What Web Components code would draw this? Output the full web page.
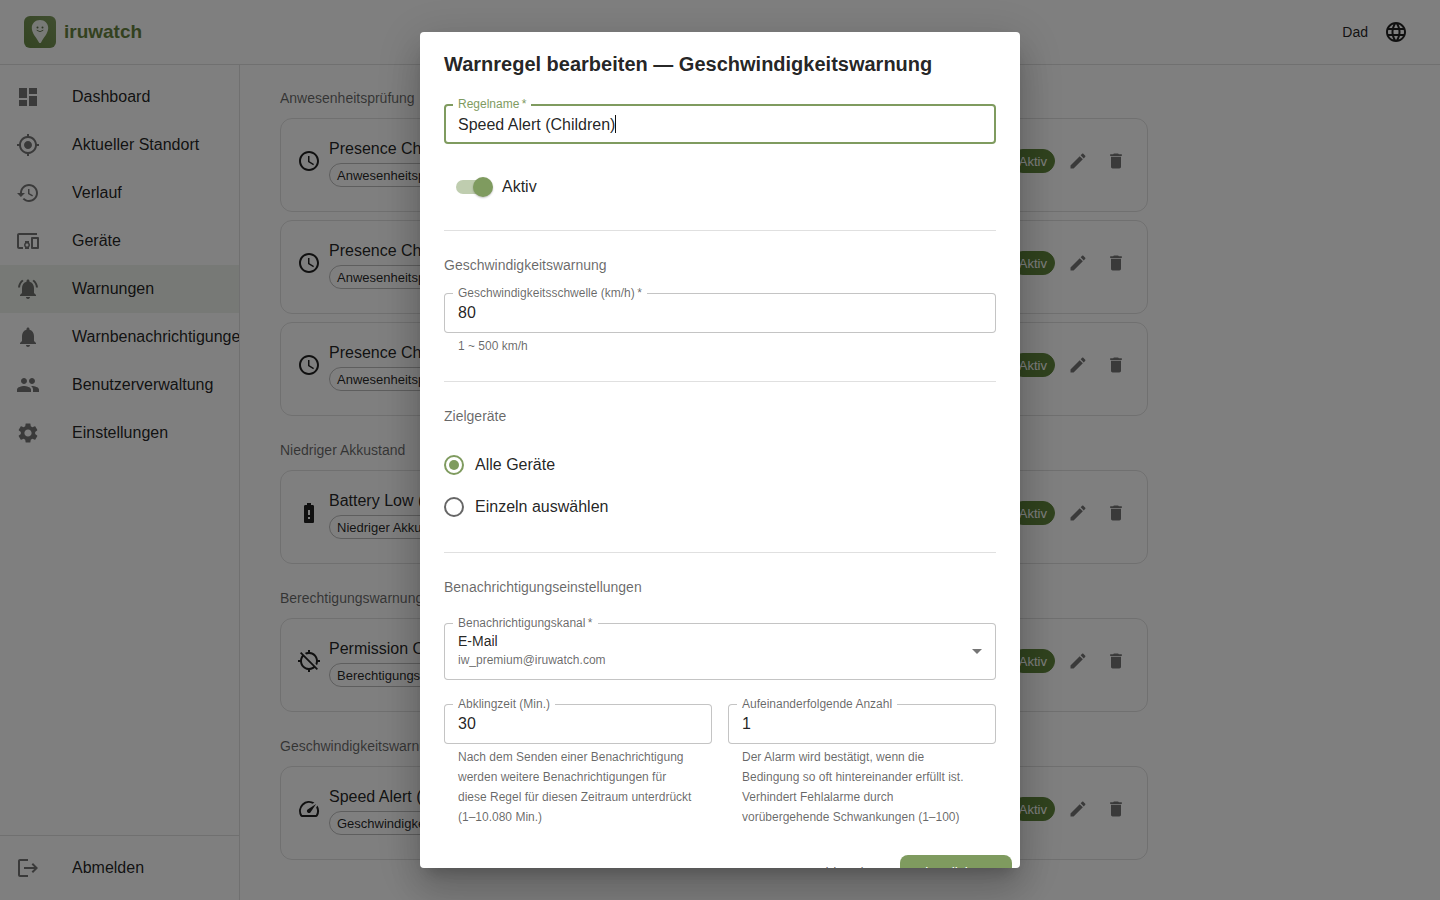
<!DOCTYPE html>
<html lang="de">
<head>
<meta charset="utf-8">
<meta name="viewport" content="width=device-width, initial-scale=1">
<title>iruwatch – Warnungen</title>
<style>
  :root {
    --green: #7f9b5f;
    --brand: #66833f;
    --success: #60863c;
    --text: rgba(0, 0, 0, .87);
    --text-soft: rgba(0, 0, 0, .6);
    --icon: rgba(0, 0, 0, .54);
    --line: rgba(0, 0, 0, .12);
  }
  body {
    margin: 0;
    font: 16px/24px "Liberation Sans", Arial, sans-serif;
    color: var(--text);
    background: #fff;
  }
</style>
</head>
<body>
<iw-app>
  <iw-header slot="header" user="Dad"></iw-header>
  <iw-sidebar slot="nav">
    <iw-nav-item icon="dashboard">Dashboard</iw-nav-item>
    <iw-nav-item icon="location">Aktueller Standort</iw-nav-item>
    <iw-nav-item icon="history">Verlauf</iw-nav-item>
    <iw-nav-item icon="devices">Geräte</iw-nav-item>
    <iw-nav-item icon="bellActive" selected>Warnungen</iw-nav-item>
    <iw-nav-item icon="bell">Warnbenachrichtigungen</iw-nav-item>
    <iw-nav-item icon="people">Benutzerverwaltung</iw-nav-item>
    <iw-nav-item icon="settings">Einstellungen</iw-nav-item>
    <iw-nav-item slot="footer" icon="logout">Abmelden</iw-nav-item>
  </iw-sidebar>

  <iw-rule-group heading="Anwesenheitsprüfung">
    <iw-rule-card icon="clock" name="Presence Check" kind="Anwesenheitsprüfung"></iw-rule-card>
    <iw-rule-card icon="clock" name="Presence Check" kind="Anwesenheitsprüfung"></iw-rule-card>
    <iw-rule-card icon="clock" name="Presence Check" kind="Anwesenheitsprüfung"></iw-rule-card>
  </iw-rule-group>
  <iw-rule-group heading="Niedriger Akkustand">
    <iw-rule-card icon="battery" name="Battery Low (Children)" kind="Niedriger Akkustand"></iw-rule-card>
  </iw-rule-group>
  <iw-rule-group heading="Berechtigungswarnung">
    <iw-rule-card icon="locationOff" name="Permission Off" kind="Berechtigungswarnung"></iw-rule-card>
  </iw-rule-group>
  <iw-rule-group heading="Geschwindigkeitswarnung">
    <iw-rule-card icon="speed" name="Speed Alert (Children)" kind="Geschwindigkeitswarnung"></iw-rule-card>
  </iw-rule-group>
</iw-app>

<iw-dialog heading="Warnregel bearbeiten — Geschwindigkeitswarnung">
  <iw-form-section>
    <iw-text-field label="Regelname" required active value="Speed Alert (Children)"></iw-text-field>
    <iw-switch>Aktiv</iw-switch>
  </iw-form-section>
  <iw-form-section heading="Geschwindigkeitswarnung">
    <iw-text-field label="Geschwindigkeitsschwelle (km/h)" required value="80" helper="1 ~ 500 km/h"></iw-text-field>
  </iw-form-section>
  <iw-form-section heading="Zielgeräte">
    <iw-radio-group label="Zielgeräte" options="Alle Geräte|Einzeln auswählen"></iw-radio-group>
  </iw-form-section>
  <iw-form-section heading="Benachrichtigungseinstellungen" loose>
    <iw-select label="Benachrichtigungskanal" required value="E-Mail" detail="iw_premium@iruwatch.com"></iw-select>
    <iw-columns>
      <iw-text-field label="Abklingzeit (Min.)" value="30" helper="Nach dem Senden einer Benachrichtigung werden weitere Benachrichtigungen für diese Regel für diesen Zeitraum unterdrückt (1–10.080 Min.)"></iw-text-field>
      <iw-text-field label="Aufeinanderfolgende Anzahl" value="1" helper="Der Alarm wird bestätigt, wenn die Bedingung so oft hintereinander erfüllt ist. Verhindert Fehlalarme durch vorübergehende Schwankungen (1–100)"></iw-text-field>
    </iw-columns>
  </iw-form-section>
  <iw-button slot="actions" plain>Abbrechen</iw-button>
  <iw-button slot="actions">Aktualisieren</iw-button>
</iw-dialog>

<script>
const ICONS = {
  dashboard: 'M3 13h8V3H3v10zm0 8h8v-6H3v6zm10 0h8V11h-8v10zm0-18v6h8V3h-8z',
  location: 'M12 8c-2.21 0-4 1.79-4 4s1.79 4 4 4 4-1.79 4-4-1.79-4-4-4zm8.94 3c-.46-4.17-3.77-7.48-7.94-7.94V1h-2v2.06C6.83 3.52 3.52 6.83 3.06 11H1v2h2.06c.46 4.17 3.77 7.48 7.94 7.94V23h2v-2.06c4.17-.46 7.48-3.77 7.94-7.94H23v-2h-2.06zM12 19c-3.87 0-7-3.13-7-7s3.13-7 7-7 7 3.13 7 7-3.13 7-7 7z',
  history: 'M13 3c-4.97 0-9 4.03-9 9H1l3.89 3.89.07.14L9 12H6c0-3.87 3.13-7 7-7s7 3.13 7 7-3.13 7-7 7c-1.93 0-3.68-.79-4.94-2.06l-1.42 1.42C8.27 19.99 10.51 21 13 21c4.97 0 9-4.03 9-9s-4.03-9-9-9zm-1 5v5l4.28 2.54.72-1.21-3.5-2.08V8H12z',
  devices: 'M3 6h18V4H3c-1.1 0-2 .9-2 2v12c0 1.1.9 2 2 2h4v-2H3V6zm10 6H9v1.78c-.61.55-1 1.33-1 2.22s.39 1.67 1 2.22V20h4v-1.78c.61-.55 1-1.34 1-2.22s-.39-1.67-1-2.22V12zm-2 5.5c-.83 0-1.5-.67-1.5-1.5s.67-1.5 1.5-1.5 1.5.67 1.5 1.5-.67 1.5-1.5 1.5zM22 8h-6c-.5 0-1 .5-1 1v10c0 .5.5 1 1 1h6c.5 0 1-.5 1-1V9c0-.5-.5-1-1-1zm-1 10h-4v-8h4v8z',
  bellActive: 'M7.58 4.08L6.15 2.65C3.75 4.48 2.17 7.3 2.03 10.5h2c.15-2.65 1.51-4.97 3.55-6.42zm12.39 6.42h2c-.15-3.2-1.73-6.02-4.12-7.85l-1.42 1.43c2.02 1.45 3.39 3.77 3.54 6.42zM18 11c0-3.07-1.64-5.64-4.5-6.32V4c0-.83-.67-1.5-1.5-1.5s-1.5.67-1.5 1.5v.68C7.63 5.36 6 7.92 6 11v5l-2 2v1h16v-1l-2-2v-5zm-6 11c.14 0 .27-.01.4-.04.65-.14 1.18-.58 1.44-1.18.1-.24.15-.5.15-.78h-4c.01 1.1.9 2 2.01 2z',
  bell: 'M12 22c1.1 0 2-.9 2-2h-4c0 1.1.89 2 2 2zm6-6v-5c0-3.07-1.64-5.64-4.5-6.32V4c0-.83-.67-1.5-1.5-1.5s-1.5.67-1.5 1.5v.68C7.63 5.36 6 7.92 6 11v5l-2 2v1h16v-1l-2-2z',
  people: 'M16 11c1.66 0 2.99-1.34 2.99-3S17.66 5 16 5c-1.66 0-3 1.34-3 3s1.34 3 3 3zm-8 0c1.66 0 2.99-1.34 2.99-3S9.66 5 8 5C6.34 5 5 6.34 5 8s1.34 3 3 3zm0 2c-2.33 0-7 1.17-7 3.5V19h14v-2.5c0-2.33-4.67-3.5-7-3.5zm8 0c-.29 0-.62.02-.97.05 1.16.84 1.97 1.97 1.97 3.45V19h6v-2.5c0-2.33-4.67-3.5-7-3.5z',
  settings: 'M19.14 12.94c.04-.3.06-.61.06-.94 0-.32-.02-.64-.07-.94l2.03-1.58c.18-.14.23-.41.12-.61l-1.92-3.32c-.12-.22-.37-.29-.59-.22l-2.39.96c-.5-.38-1.03-.7-1.62-.94l-.36-2.54c-.04-.24-.24-.41-.48-.41h-3.84c-.24 0-.43.17-.47.41l-.36 2.54c-.59.24-1.13.57-1.62.94l-2.39-.96c-.22-.08-.47 0-.59.22L2.74 8.87c-.12.21-.08.47.12.61l2.03 1.58c-.05.3-.09.63-.09.94s.02.64.07.94l-2.03 1.58c-.18.14-.23.41-.12.61l1.92 3.32c.12.22.37.29.59.22l2.39-.96c.5.38 1.03.7 1.62.94l.36 2.54c.05.24.24.41.48.41h3.84c.24 0 .44-.17.47-.41l.36-2.54c.59-.24 1.13-.56 1.62-.94l2.39.96c.22.08.47 0 .59-.22l1.92-3.32c.12-.22.07-.47-.12-.61l-2.01-1.58zM12 15.6c-1.98 0-3.6-1.62-3.6-3.6s1.62-3.6 3.6-3.6 3.6 1.62 3.6 3.6-1.62 3.6-3.6 3.6z',
  logout: 'M17 7l-1.41 1.41L18.17 11H8v2h10.17l-2.58 2.58L17 17l5-5zM4 5h8V3H4c-1.1 0-2 .9-2 2v14c0 1.1.9 2 2 2h8v-2H4V5z',
  clock: 'M11.99 2C6.47 2 2 6.48 2 12s4.47 10 9.99 10C17.52 22 22 17.52 22 12S17.52 2 11.99 2zM12 20c-4.42 0-8-3.58-8-8s3.58-8 8-8 8 3.58 8 8-3.58 8-8 8zm.5-13H11v6l5.25 3.15.75-1.23-4.5-2.67z',
  battery: 'M15.67 4H14V2h-4v2H8.33C7.6 4 7 4.6 7 5.33v15.33C7 21.4 7.6 22 8.33 22h7.33c.74 0 1.34-.6 1.34-1.33V5.33C17 4.6 16.4 4 15.67 4zM13 18h-2v-2h2v2zm0-4h-2V9h2v5z',
  locationOff: 'M20.94 11c-.46-4.17-3.77-7.48-7.94-7.94V1h-2v2.06c-1.13.12-2.19.46-3.16.97l1.5 1.5C10.16 5.19 11.06 5 12 5c3.87 0 7 3.13 7 7 0 .94-.19 1.84-.52 2.65l1.5 1.5c.5-.96.84-2.02.97-3.15H23v-2h-2.06zM3 4.27l2.04 2.04C3.97 7.62 3.25 9.23 3.06 11H1v2h2.06c.46 4.17 3.77 7.48 7.94 7.94V23h2v-2.06c1.77-.2 3.38-.91 4.69-1.98L19.73 21 21 19.73 4.27 3 3 4.27zm13.27 13.27C15.09 18.45 13.61 19 12 19c-3.87 0-7-3.13-7-7 0-1.61.55-3.09 1.46-4.27l9.81 9.81z',
  speed: 'M20.38 8.57l-1.23 1.85a8 8 0 0 1-.22 7.58H5.07A8 8 0 0 1 15.58 6.85l1.85-1.23A10 10 0 0 0 3.35 19a2 2 0 0 0 1.72 1h13.85a2 2 0 0 0 1.74-1 10 10 0 0 0-.27-10.44zm-9.79 6.84a2 2 0 0 0 2.83 0l5.66-8.49-8.49 5.66a2 2 0 0 0 0 2.83z',
  edit: 'M3 17.25V21h3.75L17.81 9.94l-3.75-3.75L3 17.25zM20.71 7.04c.39-.39.39-1.02 0-1.41l-2.34-2.34c-.39-.39-1.02-.39-1.41 0l-1.83 1.83 3.75 3.75 1.83-1.83z',
  trash: 'M6 19c0 1.1.9 2 2 2h8c1.1 0 2-.9 2-2V7H6v12zM19 4h-3.5l-1-1h-5l-1 1H5v2h14V4z',
  globe: 'M11.99 2C6.47 2 2 6.48 2 12s4.47 10 9.99 10C17.52 22 22 17.52 22 12S17.52 2 11.99 2zm6.93 6h-2.95c-.32-1.25-.78-2.45-1.38-3.56 1.84.63 3.37 1.91 4.33 3.56zM12 4.04c.83 1.2 1.48 2.53 1.91 3.96h-3.82c.43-1.43 1.08-2.76 1.91-3.96zM4.26 14C4.1 13.36 4 12.69 4 12s.1-1.36.26-2h3.38c-.08.66-.14 1.32-.14 2 0 .68.06 1.34.14 2H4.26zm.82 2h2.95c.32 1.25.78 2.45 1.38 3.56-1.84-.63-3.37-1.9-4.33-3.56zm2.95-8H5.08c.96-1.66 2.49-2.93 4.33-3.56C8.81 5.55 8.35 6.75 8.03 8zM12 19.96c-.83-1.2-1.48-2.53-1.91-3.96h3.82c-.43 1.43-1.08 2.76-1.91 3.96zM14.34 14H9.66c-.09-.66-.16-1.32-.16-2 0-.68.07-1.35.16-2h4.68c.09.65.16 1.32.16 2 0 .68-.07 1.34-.16 2zm.25 5.56c.6-1.11 1.06-2.31 1.38-3.56h2.95c-.96 1.65-2.49 2.93-4.33 3.56zM16.36 14c.08-.66.14-1.32.14-2 0-.68-.06-1.34-.14-2h3.38c.16.64.26 1.31.26 2s-.1 1.36-.26 2h-3.38z',
  dropdown: 'M7 10l5 5 5-5z'
};

/* Base class: each element returns its shadow markup from render(). */
class IwElement extends HTMLElement {
  connectedCallback() {
    if (this.shadowRoot) return;
    this.attachShadow({ mode: 'open' }).innerHTML =
      '<style>*{box-sizing:border-box}:host{box-sizing:border-box;display:block}</style>' + this.render();
  }
  attr(name) { return this.getAttribute(name) || ''; }
  get star() { return this.hasAttribute('required') ? '&#8201;*' : ''; }
}
const define = (name, render) => customElements.define(name, class extends IwElement {
  render() { return render(this); }
});

define('iw-icon', el => `
  <style>
    :host { display: block; flex: none; width: 24px; height: 24px; }
    :host([small]) { width: 20px; height: 20px; }
    svg { display: block; width: 100%; height: 100%; fill: currentColor; }
  </style>
  <svg viewBox="0 0 24 24" aria-hidden="true"><path d="${ICONS[el.attr('name')]}"/></svg>`);

define('iw-app', () => `
  <style>
    :host { display: flex; flex-direction: column; height: 100vh; }
    .body { display: flex; flex: 1; min-height: 0; }
    main { flex: 1; min-width: 0; overflow: auto; padding: 23px 40px; }
    .list { display: flex; flex-direction: column; gap: 24px; max-width: 868px; }
  </style>
  <slot name="header"></slot>
  <div class="body">
    <slot name="nav"></slot>
    <main><div class="list"><slot></slot></div></main>
  </div>`);

define('iw-header', el => `
  <style>
    header { display: flex; align-items: center; justify-content: space-between;
      height: 65px; padding: 0 24px; border-bottom: 1px solid var(--line); }
    a { display: flex; align-items: center; gap: 8px; color: var(--brand);
      font-size: 19px; font-weight: 700; text-decoration: none; }
    a svg { display: block; width: 32px; height: 32px; }
    .user { display: flex; align-items: center; gap: 8px; font-size: 14px; }
    button { padding: 8px; border: 0; background: none; color: inherit; }
  </style>
  <header>
    <a href="#">
      <svg viewBox="0 0 32 32" aria-hidden="true">
        <defs><linearGradient id="g" x1="0" y1="1" x2="1" y2="0">
          <stop offset="0" stop-color="#678844"/><stop offset="1" stop-color="#7f9b5f"/>
        </linearGradient></defs>
        <rect width="32" height="32" rx="6" fill="url(#g)"/>
        <path d="M16 4c-4.600 0-8.200 3.400-8.200 8 0 5.400 4.700 9.600 7 14.200.5 1.200 1.900 1.200 2.400 0 2.300-4.600 7-8.800 7-14.200 0-4.600-3.600-8-8.200-8z" fill="#f1f4ee"/>
        <circle cx="13.500" cy="11.500" r="1" fill="#5b6e4a"/><circle cx="18.500" cy="11.500" r="1" fill="#5b6e4a"/>
        <path d="M13 14.500q3 2.600 6 0" fill="none" stroke="#5b6e4a" stroke-width=".9" stroke-linecap="round"/>
      </svg>
      <span>iruwatch</span>
    </a>
    <div class="user"><span>${el.attr('user')}</span>
      <button type="button" aria-label="Sprache"><iw-icon name="globe"></iw-icon></button></div>
  </header>`);

define('iw-sidebar', () => `
  <style>
    :host { flex: none; width: 240px; }
    nav { display: flex; flex-direction: column; justify-content: space-between;
      height: 100%; overflow: hidden; border-right: 1px solid var(--line); }
    div { padding: 8px 0; }
    .foot { border-top: 1px solid var(--line); }
  </style>
  <nav><div><slot></slot></div><div class="foot"><slot name="footer"></slot></div></nav>`);

define('iw-nav-item', el => `
  <style>
    a { display: flex; align-items: center; gap: 32px; height: 48px; padding: 0 16px;
      color: inherit; text-decoration: none; white-space: nowrap; }
    :host([selected]) a { background: rgba(127, 155, 95, .12); }
    iw-icon { color: var(--icon); }
  </style>
  <a href="#"${el.hasAttribute('selected') ? ' aria-current="page"' : ''}><iw-icon name="${el.attr('icon')}"></iw-icon><span><slot></slot></span></a>`);

/* Small grey heading shared by the rule list and the form sections. */
const HEADING_CSS = `
  h2 { margin: 0; padding-bottom: 2px; font-size: 14px; line-height: 20px; font-weight: 400; color: var(--text-soft); }`;

define('iw-rule-group', el => `
  <style>
    ${HEADING_CSS}
    section, div { display: flex; flex-direction: column; gap: 8px; }
  </style>
  <section><h2>${el.attr('heading')}</h2><div><slot></slot></div></section>`);

define('iw-chip', () => `
  <style>
    :host { display: block; flex: none; width: max-content; height: 24px; padding: 0 7px;
      border: 1px solid rgba(0, 0, 0, .26); border-radius: 12px; font-size: 13px; line-height: 24px; }
    :host([filled]) { color: #fff; background: var(--success); border-color: var(--success); }
  </style><slot></slot>`);

define('iw-rule-card', el => `
  <style>
    article { display: flex; align-items: center; gap: 8px; padding: 16px 16px 24px;
      border: 1px solid var(--line); border-radius: 12px; }
    .info { flex: 1; min-width: 0; }
    h3 { margin: 0; font-size: 16px; line-height: 28px; font-weight: 400; }
    button { padding: 5px; border: 0; background: none; color: var(--icon); }
  </style>
  <article>
    <iw-icon name="${el.attr('icon')}"></iw-icon>
    <div class="info"><h3>${el.attr('name')}</h3><iw-chip>${el.attr('kind')}</iw-chip></div>
    <iw-chip filled>Aktiv</iw-chip>
    <button type="button" aria-label="Bearbeiten"><iw-icon small name="edit"></iw-icon></button>
    <button type="button" aria-label="Löschen"><iw-icon small name="trash"></iw-icon></button>
  </article>`);

define('iw-dialog', el => `
  <style>
    :host { position: fixed; inset: 0; display: flex; align-items: center; justify-content: center;
      padding: 32px; background: rgba(0, 0, 0, .5); }
    .paper { width: 100%; max-width: 600px; max-height: 100%; overflow-y: auto; scrollbar-width: none;
      background: #fff; border-radius: 4px;
      box-shadow: 0 11px 15px -7px rgba(0,0,0,.2), 0 24px 38px 3px rgba(0,0,0,.14), 0 9px 46px 8px rgba(0,0,0,.12); }
    h1 { margin: 0; padding: 16px 24px; font-size: 20px; line-height: 32px; font-weight: 700; }
    .content { padding: 8px 24px 19px; }
    .actions { display: flex; justify-content: flex-end; gap: 8px; padding: 8px; }
  </style>
  <div class="paper" role="dialog" aria-modal="true" aria-labelledby="title">
    <h1 id="title">${el.attr('heading')}</h1>
    <div class="content"><slot></slot></div>
    <div class="actions"><slot name="actions"></slot></div>
  </div>`);

define('iw-form-section', el => `
  <style>
    ${HEADING_CSS}
    :host(:not(:first-child)) { margin-top: 24px; padding-top: 24px; border-top: 1px solid var(--line); }
    section { display: flex; flex-direction: column; gap: 16px; }
    :host(:first-child) section, :host([loose]) section { gap: 24px; }
  </style>
  <section>${el.attr('heading') ? `<h2>${el.attr('heading')}</h2>` : ''}<slot></slot></section>`);

define('iw-columns', () => `
  <style>:host { display: grid; grid-template-columns: 1fr 1fr; gap: 16px; }</style><slot></slot>`);

const FIELD_CSS = `
  .box { position: relative; }
  label { position: absolute; top: -8px; left: 9px; padding: 0 5px; background: #fff;
    font-size: 12px; line-height: 16px; color: var(--text-soft); white-space: nowrap; }
  input, select { display: block; width: 100%; margin: 0; border: 1px solid rgba(0, 0, 0, .23);
    border-radius: 4px; outline: 0; background: #fff; color: var(--text); font-family: inherit; }`;

define('iw-text-field', el => `
  <style>
    ${FIELD_CSS}
    input { height: 40px; padding: 0 13px; font-size: 16px; }
    :host([active]) input { padding: 2px 12px 0; border: 2px solid var(--green);
      background: linear-gradient(#111, #111) 169px center / 1px 18px no-repeat #fff; }
    :host([active]) label { color: var(--green); }
    p { margin: 3px 14px 0; padding-bottom: 1px; font-size: 12px; line-height: 20px; color: var(--text-soft); }
  </style>
  <div class="box"><input id="f" type="text" value="${el.attr('value')}"><label for="f">${el.attr('label')}${el.star}</label></div>
  ${el.attr('helper') ? `<p>${el.attr('helper')}</p>` : ''}`);

define('iw-select', el => `
  <style>
    ${FIELD_CSS}
    select { height: 57px; padding: 0 36px 22px 13px; appearance: none; font-size: 14px; }
    .detail { position: absolute; left: 14px; bottom: 10px; font-size: 12px; line-height: 20px;
      color: var(--text-soft); pointer-events: none; }
    iw-icon { position: absolute; right: 7px; top: 16px; color: var(--icon); pointer-events: none; }
  </style>
  <div class="box">
    <select id="f"><option>${el.attr('value')}</option></select>
    <label for="f">${el.attr('label')}${el.star}</label>
    <span class="detail">${el.attr('detail')}</span>
    <iw-icon name="dropdown"></iw-icon>
  </div>`);

define('iw-switch', () => `
  <style>
    label { display: flex; align-items: center; width: max-content; height: 38px; }
    input { appearance: none; display: flex; align-items: center; justify-content: flex-end;
      width: 34px; height: 14px; margin: 0 12px; border-radius: 7px; background: #bfcdaf; }
    input::before { content: ""; flex: none; width: 20px; height: 20px; margin-right: -3px; border-radius: 50%;
      background: var(--green); box-shadow: 0 1px 2px rgba(0, 0, 0, .24); }
  </style>
  <label><input type="checkbox" role="switch" checked><span><slot></slot></span></label>`);

define('iw-radio-group', el => `
  <style>
    label { display: flex; align-items: center; gap: 11px; width: max-content; height: 42px; }
    input { appearance: none; display: grid; place-items: center; width: 20px; height: 20px; margin: 0;
      border: 2px solid var(--text-soft); border-radius: 50%; }
    input:checked { border-color: var(--green); }
    input:checked::before { content: ""; width: 10px; height: 10px; border-radius: 50%; background: var(--green); }
  </style>
  <div role="radiogroup" aria-label="${el.attr('label')}">
    ${el.attr('options').split('|').map((o, i) =>
      `<label><input type="radio" name="choice"${i ? '' : ' checked'}><span>${o}</span></label>`).join('')}
  </div>`);

define('iw-button', () => `
  <style>
    button { padding: 6px 16px; border: 0; border-radius: 8px; background: var(--green); color: #fff;
      font: inherit; font-size: 14px; line-height: 24px; }
    :host([plain]) button { padding: 6px 8px; background: none; color: var(--text-soft); }
  </style>
  <button type="button"><slot></slot></button>`);
</script>
</body>
</html>
